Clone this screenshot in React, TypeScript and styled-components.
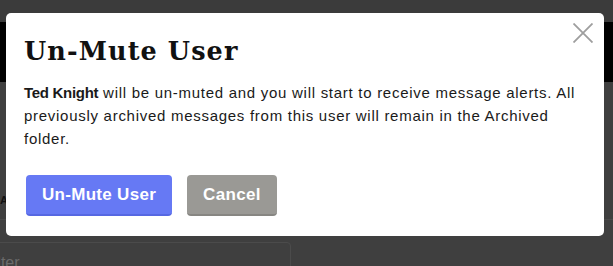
import React from 'react';
import styled, { createGlobalStyle } from 'styled-components';

const GlobalStyle = createGlobalStyle`
  html, body {
    margin: 0;
    padding: 0;
    background: #3f3f3f;
    overflow: hidden;
  }
  * {
    box-sizing: border-box;
  }
`;

const Page = styled.div`
  position: relative;
  width: 613px;
  height: 266px;
  background: #3f3f3f;
  overflow: hidden;
  font-family: 'Liberation Sans', Arial, sans-serif;
`;

const TopStrip = styled.div`
  height: 22px;
  background: #3b3b3b;
`;

const Header = styled.div`
  height: 60px;
  background: #000;
`;

const Body = styled.div`
  display: flex;
  flex-direction: column;
  padding-top: 108px;
`;

const TabRow = styled.div`
  height: 30px;
  line-height: 20px;
  border-bottom: 1px solid #4a4a4a;
  color: #111;
  font-size: 11px;
  font-weight: 700;
`;

const FilterBox = styled.div`
  margin-top: 22px;
  margin-left: -30px;
  width: 321px;
  height: 40px;
  border: 1px solid #4b4b4b;
  border-radius: 4px;
  padding: 11px 13px;
  color: #6a6a6a;
  font-size: 16px;
`;

const Modal = styled.div`
  position: absolute;
  left: 6px;
  top: 13px;
  width: 598px;
  height: 223px;
  background: #fff;
  border-radius: 5px;
  padding: 20px 8px 0 18px;
`;

const CloseButton = styled.button`
  position: absolute;
  top: 10px;
  right: 11px;
  width: 20px;
  height: 20px;
  padding: 0;
  border: none;
  background: transparent;
  cursor: pointer;
  svg {
    display: block;
  }
`;

const Title = styled.h2`
  margin: 0;
  font-family: 'DejaVu Serif', 'Liberation Serif', serif;
  font-weight: 700;
  font-size: 25.5px;
  letter-spacing: 1.1px;
  line-height: 36px;
  color: #111;
`;

const Message = styled.p`
  margin: 12px 0 0;
  font-size: 15px;
  letter-spacing: 0.72px;
  line-height: 23px;
  color: #1a1a1a;
  b {
    font-weight: 700;
    letter-spacing: -0.3px;
  }
`;

const Actions = styled.div`
  display: flex;
  gap: 15px;
  margin-top: 25px;
  padding-left: 2px;
`;

const Button = styled.button<{ $variant: 'primary' | 'secondary' }>`
  height: 41px;
  padding: 0 16px;
  border: none;
  border-radius: 4px;
  border-bottom: 2px solid ${(p) => (p.$variant === 'primary' ? '#5668e2' : '#878682')};
  background: ${(p) => (p.$variant === 'primary' ? '#6679f4' : '#9a9995')};
  color: #fff;
  font-family: 'Liberation Sans', Arial, sans-serif;
  font-weight: 700;
  font-size: 17px;
  letter-spacing: 0.3px;
  cursor: pointer;
`;

export default function App() {
  return (
    <>
      <GlobalStyle />
      <Page>
        <TopStrip />
        <Header />
        <Body>
          <TabRow>A</TabRow>
          <FilterBox>Filter</FilterBox>
        </Body>
        <Modal>
          <CloseButton aria-label="Close">
            <svg width="20" height="20" viewBox="0 0 20 20">
              <path d="M0.5 0.5 L19.5 19.5 M19.5 0.5 L0.5 19.5" stroke="#9e9e9e" strokeWidth="1.8" fill="none" />
            </svg>
          </CloseButton>
          <Title>Un-Mute User</Title>
          <Message>
            <b>Ted Knight</b> will be un-muted and you will start to receive message alerts. All
            previously archived messages from this user will remain in the Archived folder.
          </Message>
          <Actions>
            <Button $variant="primary">Un-Mute User</Button>
            <Button $variant="secondary">Cancel</Button>
          </Actions>
        </Modal>
      </Page>
    </>
  );
}
